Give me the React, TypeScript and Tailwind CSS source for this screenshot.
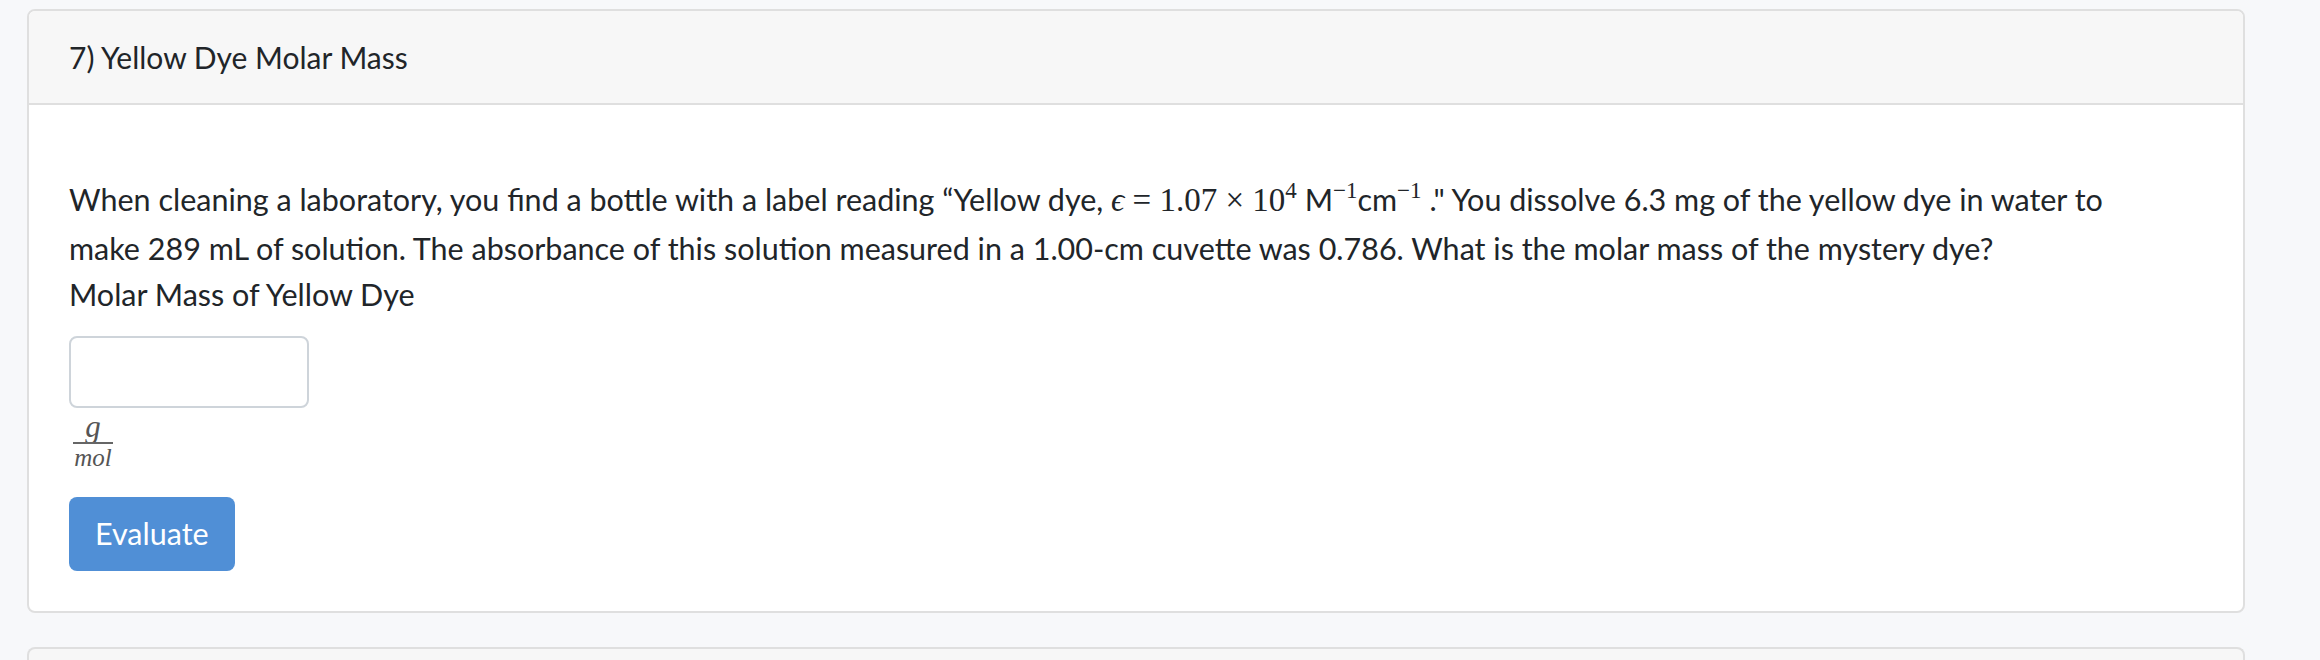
import React from 'react';

const sans = { fontFamily: 'Lato, "Open Sans", sans-serif' };
const serif = { fontFamily: '"Liberation Serif", "DejaVu Serif", serif' };

function Sup({ children }: { children: React.ReactNode }) {
  return (
    <span style={serif} className="relative top-[-13px] text-[23px] leading-none">
      {children}
    </span>
  );
}

function Fraction() {
  return (
    <div className="inline-flex flex-col items-center text-[#555] w-[40px] ml-[4px]" style={serif}>
      <span className="italic text-[31px] leading-[22px]">g</span>
      <span className="block w-full h-[2px] bg-[#666] mt-[4px]" />
      <span className="italic text-[25px] leading-[28px]">mol</span>
    </div>
  );
}

export default function App() {
  return (
    <div className="min-h-screen bg-[#f7f8fa] pl-[27px] pt-[9px] text-[#212529]" style={sans}>
      <div className="w-[2218px] rounded-[8px] border-2 border-[#dfdfdf] bg-white overflow-hidden">
        <div className="h-[94px] border-b-2 border-[#dfdfdf] bg-[#f7f7f7] px-[40px] flex items-center text-[30px]">
          7) Yellow Dye Molar Mass
        </div>

        <div className="px-[40px] pt-[70px] pb-[40px]">
          <p className="text-[30.5px] leading-[48px] whitespace-nowrap">
            When cleaning a laboratory, you find a bottle with a label reading “Yellow dye,{' '}
            <span style={serif} className="text-[33px]">
              <span className="italic">ϵ</span> = 1.07 × 10<Sup>4</Sup>
            </span>{' '}
            M<Sup>−1</Sup>cm<Sup>−1</Sup> ." You dissolve 6.3 mg of the yellow dye in water to
            <br />
            make 289 mL of solution. The absorbance of this solution measured in a 1.00-cm cuvette was 0.786. What is
            the molar mass of the mystery dye?
          </p>
          <div className="text-[30.5px] leading-[44px]">Molar Mass of Yellow Dye</div>

          <input
            type="text"
            className="block mt-[20px] w-[240px] h-[72px] rounded-[8px] border-2 border-[#ced4da] bg-white px-[24px] text-[30px] outline-none"
          />

          <div className="mt-[8px]">
            <Fraction />
          </div>

          <button className="block mt-[25px] h-[74px] px-[26px] rounded-[8px] bg-[#508fd6] text-white text-[30.5px]">
            Evaluate
          </button>
        </div>
      </div>

      <div className="mt-[34px] w-[2218px] h-[40px] rounded-t-[8px] border-2 border-b-0 border-[#dfdfdf] bg-[#f7f7f7]" />
    </div>
  );
}
